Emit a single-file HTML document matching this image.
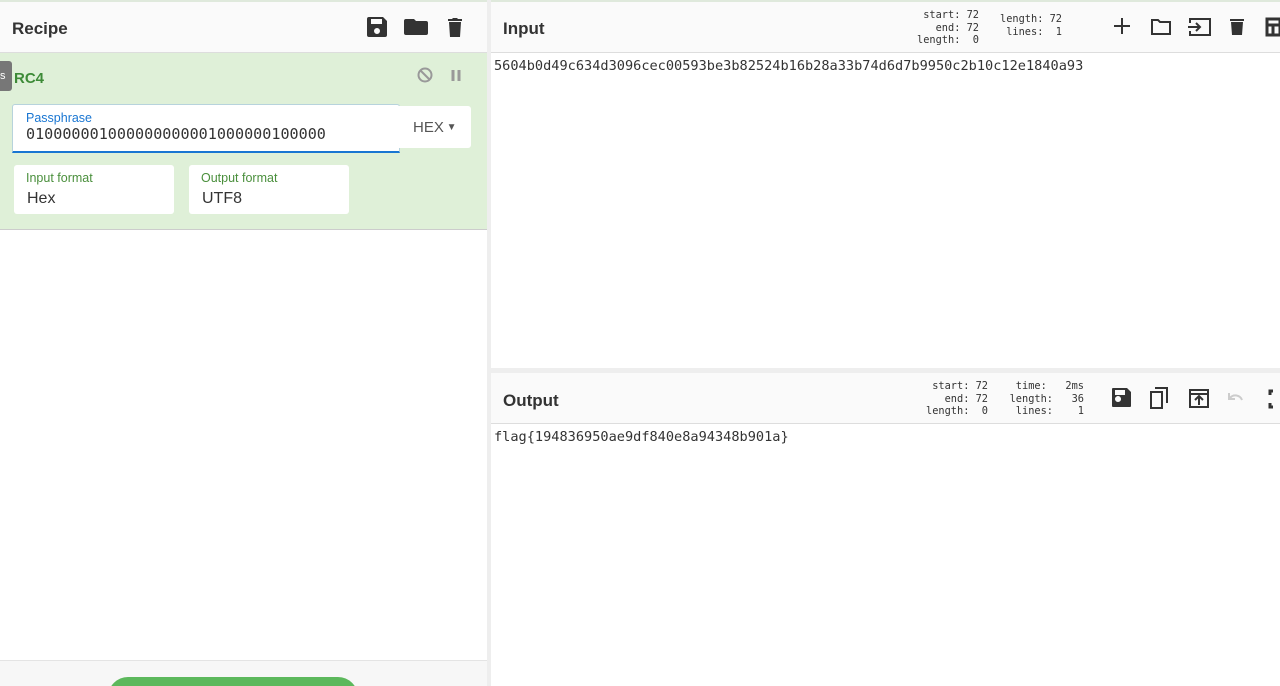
<!DOCTYPE html><html style="overflow:hidden"><head><style>
html,body{margin:0;width:1280px;height:686px;overflow:hidden}
body{font-family:"Liberation Sans",sans-serif;background:#fff;position:relative}
.abs{position:absolute}
.hdr{background:#fafafa;border-bottom:1px solid #ddd}
.ttl{font-size:17px;font-weight:bold;color:#333}
.mono{font-family:"DejaVu Sans Mono","Liberation Mono",monospace}
.stat{font-size:10.3px;color:#333;text-align:right;line-height:12.5px;white-space:pre}
.box{background:#fff;border-radius:3px}
.lbl{font-size:12.5px;color:#4a8f3c}
.val{font-size:16px;color:#333}
</style></head><body>
<div class="abs" style="left:0;top:0;width:1280px;height:2px;background:#dfe9dc"></div>
<div class="abs hdr" style="left:0;top:2px;width:487px;height:50px"></div>
<div class="abs ttl" style="left:12px;top:19px">Recipe</div>
<svg class="abs" style="left:367px;top:16px" width="104" height="22" viewBox="0 0 104 22" fill="#333">
<path d="M2 1h14l4 4v14a2 2 0 0 1-2 2H2a2 2 0 0 1-2-2V3a2 2 0 0 1 2-2zm2 2v5h11V3zm6 9a3 3 0 1 0 0 6a3 3 0 0 0 0-6z"/>
<path d="M39 3h8l2 2h10a2 2 0 0 1 2 2v10a2 2 0 0 1-2 2H39a2 2 0 0 1-2-2V5a2 2 0 0 1 2-2z"/>
<path d="M81 3h4l1-1h4l1 1h4v2H81zm1 3h12l-1 15H83z"/>
</svg>
<div class="abs" style="left:0;top:53px;width:487px;height:176px;background:#dff0d8;border-bottom:1px solid #ccc"></div>
<div class="abs" style="left:0;top:61px;width:12px;height:30px;background:#777;border-radius:0 3px 3px 0;color:#fff;font-size:11px;line-height:30px">s</div>
<div class="abs" style="left:14px;top:70px;font-size:15px;font-weight:bold;color:#3d8b37">RC4</div>
<svg class="abs" style="left:417px;top:67px" width="50" height="17" fill="none" stroke="#999" stroke-width="2"><circle cx="8" cy="8" r="6.5"/><path d="M3.5 3.5l9 9"/><path d="M36 3v11M42 3v11" stroke-width="3"/></svg>
<div class="abs box" style="left:12px;top:104px;width:386px;height:46px;border:1px solid #b7d3dc;border-bottom:2px solid #1976d2;border-radius:3px 3px 0 0"></div>
<div class="abs" style="left:26px;top:111px;font-size:12.5px;color:#1976d2">Passphrase</div>
<div class="abs mono val" style="left:26px;top:125px;font-size:15.1px">010000001000000000001000000100000</div>
<div class="abs box" style="left:398px;top:106px;width:73px;height:42px;border-radius:0 3px 3px 0"></div>
<div class="abs" style="left:413px;top:119px;font-size:15px;color:#555">HEX<span style="font-size:10px;position:relative;top:-2px"> ▼</span></div>
<div class="abs box" style="left:14px;top:165px;width:160px;height:49px"></div>
<div class="abs lbl" style="left:26px;top:171px">Input format</div>
<div class="abs val" style="left:27px;top:190px">Hex</div>
<div class="abs box" style="left:189px;top:165px;width:160px;height:49px"></div>
<div class="abs lbl" style="left:201px;top:171px">Output format</div>
<div class="abs val" style="left:202px;top:190px">UTF8</div>
<div class="abs" style="left:0;top:660px;width:487px;height:26px;background:#f7f7f7;border-top:1px solid #e4e4e4;overflow:hidden"><div class="abs" style="left:108px;top:16px;width:250px;height:40px;background:#5cb85c;border-radius:20px"></div></div>
<div class="abs" style="left:487px;top:0;width:4px;height:686px;background:#eee"></div>
<div class="abs hdr" style="left:491px;top:2px;width:789px;height:50px"></div>
<div class="abs ttl" style="left:503px;top:19px">Input</div>
<div class="abs stat mono" style="left:905px;top:9px;width:74px">start: 72
end: 72
length:  0</div>
<div class="abs stat mono" style="left:990px;top:13px;width:72px">length: 72
lines:  1</div>
<svg class="abs" style="left:1112px;top:15px" width="168" height="24" fill="none" stroke="#333" stroke-width="2">
<path d="M10 3v16M2 11h16"/>
<path d="M40 5h6l2 2h10v12H40z"/>
<path d="M78 8V4h20v16H78v-4M76 12h12M84 8l4 4-4 4"/>
<path d="M118 4h14v2h-14z M119 7h12l-1 13h-10z" fill="#333" stroke="none"/>
<path d="M155 4h13v16h-13z M155 10h13M161 10v10" fill="none" stroke-width="3"/>
</svg>
<div class="abs mono" style="left:494px;top:58px;font-size:13.6px;color:#333">5604b0d49c634d3096cec00593be3b82524b16b28a33b74d6d7b9950c2b10c12e1840a93</div>
<div class="abs" style="left:491px;top:368px;width:789px;height:5px;background:#eee"></div>
<div class="abs hdr" style="left:491px;top:373px;width:789px;height:50px"></div>
<div class="abs ttl" style="left:503px;top:391px">Output</div>
<div class="abs stat mono" style="left:915px;top:380px;width:73px">start: 72
end: 72
length:  0</div>
<div class="abs stat mono" style="left:995px;top:380px;width:89px">time:   2ms
length:   36
lines:    1</div>
<svg class="abs" style="left:1110px;top:386px" width="170" height="25" fill="none" stroke="#333" stroke-width="2">
<path d="M3 2h14l4 4v14a1 1 0 0 1-1 1H3a1 1 0 0 1-1-1V3a1 1 0 0 1 1-1zm2 2v5h10V4zm6 9a3 3 0 1 0 0 .1z" fill="#333" stroke="none"/>
<path d="M41 6h11v16H41zM45 2h12v15"/>
<path d="M80 4h18v17H80zM80 8h18M89 19v-8M85 14l4-4 4 4"/>
<path d="M120 12a7 7 0 0 1 12 2M119 7v6h6" stroke="#ccc"/>
<path d="M160 9V5h3M160 17v4h3" stroke-width="3"/>
</svg>
<div class="abs mono" style="left:494px;top:429px;font-size:13.6px;color:#333">flag{194836950ae9df840e8a94348b901a}</div>
</body></html>
